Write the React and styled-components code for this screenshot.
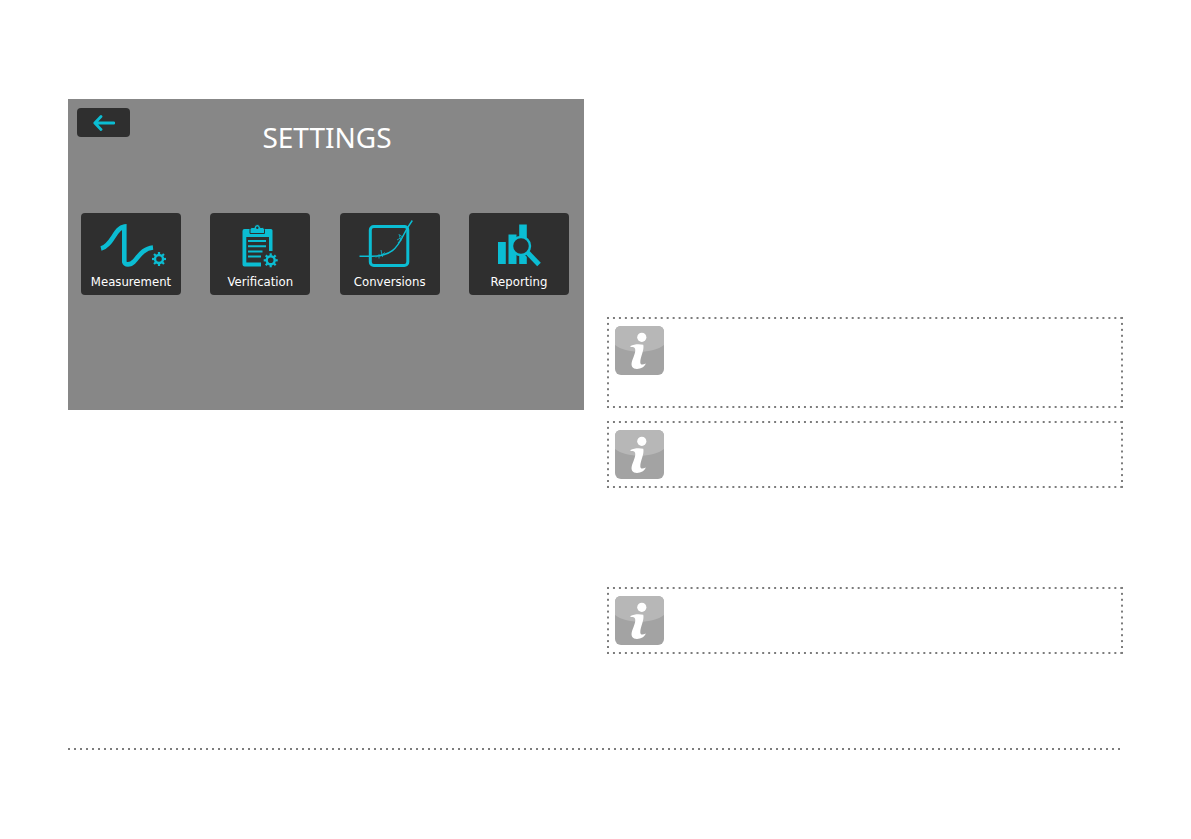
import React from "react";
import styled, { createGlobalStyle } from "styled-components";

const CYAN = "#0bbdd3";
const DARK = "#2f2f2f";
const DOT = "#7c7c7c";

const GlobalStyle = createGlobalStyle`
  * {
    box-sizing: border-box;
  }

  body {
    margin: 0;
    background: #ffffff;
    font-family: "Noto Sans", Tahoma, sans-serif;
  }
`;

const Page = styled.main`
  padding: 99px 68px 88px;
`;

const Columns = styled.div`
  display: grid;
  grid-template-columns: 1fr 1fr;
  gap: 23px;
  align-items: start;
`;

const Screen = styled.section`
  min-height: 311px;
  padding: 9px 15px 115px 9px;
  background: #878787;
`;

const BackButton = styled.button`
  display: flex;
  align-items: center;
  justify-content: center;
  width: 53px;
  height: 29px;
  padding: 0;
  border: 0;
  border-radius: 4px;
  background: ${DARK};
  cursor: pointer;
`;

const Title = styled.h1`
  margin: -19px 0 57px;
  padding-left: 8px;
  color: #ffffff;
  font-size: 28px;
  font-weight: 400;
  line-height: 38px;
  text-align: center;
`;

const Tiles = styled.nav`
  display: flex;
  justify-content: space-between;
  padding-left: 4px;
`;

const Tile = styled.button`
  display: flex;
  flex-direction: column;
  align-items: center;
  gap: 4px;
  width: 100px;
  height: 82px;
  padding: 6px 0 4px;
  border: 0;
  border-radius: 4px;
  background: ${DARK};
  color: #ffffff;
  font-family: "DejaVu Sans Condensed", "Noto Sans", sans-serif;
  font-size: 13px;
  line-height: 18px;
  cursor: pointer;
`;

const Notes = styled.div`
  display: flex;
  flex-direction: column;
  padding-top: 218px;
`;

const Note = styled.aside`
  position: relative;
  min-height: ${({ $tall }) => ($tall ? "91px" : "67px")};
  margin-bottom: ${({ $space }) => $space || 0}px;
  padding: 9px 8px;

  &::before {
    content: "";
    position: absolute;
    inset: -2px;
    background-image:
      linear-gradient(90deg, transparent 2px, ${DOT} 2px, ${DOT} 4px, transparent 4px),
      linear-gradient(90deg, transparent 2px, ${DOT} 2px, ${DOT} 4px, transparent 4px),
      linear-gradient(transparent 2px, ${DOT} 2px, ${DOT} 4px, transparent 4px),
      linear-gradient(transparent 2px, ${DOT} 2px, ${DOT} 4px, transparent 4px);
    background-size: 6px 2px, 6px 2px, 2px 6px, 2px 6px;
    background-position: 0 2px, 0 calc(100% - 2px), 2px 0, calc(100% - 2px) 0;
    background-repeat: round no-repeat, round no-repeat, no-repeat round, no-repeat round;
    pointer-events: none;
  }
`;

const Divider = styled.hr`
  height: 2px;
  margin: 94px 0 0;
  border: 0;
  background: linear-gradient(90deg, ${DOT} 2px, transparent 2px) 0 0 / 6px 2px repeat-x;
`;

const Icon = styled.svg`
  display: block;
  flex: none;
`;

const Gear = ({ x, y }) => (
  <g transform={`translate(${x} ${y})`} stroke={CYAN} fill="none">
    <circle r="4" strokeWidth="2.4" />
    {[0, 45, 90, 135, 180, 225, 270, 315].map((angle) => (
      <path key={angle} d="M0 -4.6V-7" strokeWidth="2.2" transform={`rotate(${angle})`} />
    ))}
  </g>
);

const MeasurementIcon = () => (
  <>
    <path
      d="M5 29.5C16 27 19 8.5 28.3 7.5V43C29 46 34 46.5 38 42.5C43 37 47 29.5 57 28.5"
      fill="none"
      stroke={CYAN}
      strokeWidth="4.6"
    />
    <Gear x={63} y={40} />
  </>
);

const VerificationIcon = () => (
  <>
    <path
      d="M19.5 10H46Q47.5 10 47.5 11.5V32H44V18H21.3V43.5H36V47.5H19.5Q17.5 47.5 17.5 45.5V12Q17.5 10 19.5 10Z"
      fill={CYAN}
    />
    <path
      d="M25 14.5V10.5Q25 8.5 27 8.5H29.3A3 3 0 0 1 35.3 8.5H37.5Q39.5 8.5 39.5 10.5V14.5Z"
      fill={CYAN}
      stroke={DARK}
      strokeWidth="1"
    />
    <circle cx="32.3" cy="8.8" r="1.2" fill={DARK} />
    <path d="M23 22H41M23 27.2H41M23 32.4H37.5M23 37.6H36" stroke={CYAN} strokeWidth="2" />
    <Gear x={45.7} y={41.3} />
  </>
);

const ConversionsIcon = () => (
  <g fill="none" stroke={CYAN}>
    <rect x="15.3" y="7.5" width="37.5" height="39" rx="3.5" strokeWidth="3" />
    <path d="M4.5 37.3H17C36 37.3 42 29 48 17C51 11 54 6 57.3 1.5" strokeWidth="1.5" />
    <path
      d="M21 38.5L24 35.5M24 39.5V35.5M26 31L27.5 38M25 37L30 33.5M42 21L45.5 19M44 15L46 22M45 16L48 18.5M43 24L47 19"
      strokeWidth="0.8"
    />
  </g>
);

const ReportingIcon = () => (
  <>
    <path d="M14 23H21.8V45H14ZM24.5 15.5H32.5V45H24.5ZM35.2 5.5H42.8V45H35.2Z" fill={CYAN} />
    <path d="M43.5 33.5L55 45" stroke={DARK} strokeWidth="7" />
    <path d="M43.5 33.5L55 45.5" stroke={CYAN} strokeWidth="5" />
    <circle cx="37" cy="27" r="9" fill={DARK} stroke={CYAN} strokeWidth="2.4" />
  </>
);

const InfoIcon = () => (
  <Icon width="49" height="49" viewBox="0 0 49 49" role="img" aria-label="Information">
    <rect width="49" height="49" rx="6" fill="#a3a3a3" />
    <path d="M0 19V6Q0 0 6 0H43Q49 0 49 6V19C38 28 11 28 0 19Z" fill="#b7b7b7" />
    <circle cx="26.8" cy="11.3" r="4.6" fill="#ffffff" />
    <path
      d="M15.5 20C19 18.2 24 17.8 28.3 18.8C29.5 24 25.3 31 25.3 36.2C25.3 39.3 27.8 39 30.8 37.5C29.5 41 26 42.9 22 42.9C17.5 42.9 15.8 40 16.8 36C17.8 32 21.3 26 20 22.5C19.2 20.8 17.5 21 15.5 21Z"
      fill="#ffffff"
    />
  </Icon>
);

const items = [
  { label: "Measurement", Drawing: MeasurementIcon },
  { label: "Verification", Drawing: VerificationIcon },
  { label: "Conversions", Drawing: ConversionsIcon },
  { label: "Reporting", Drawing: ReportingIcon },
];

const App = () => {
  return (
    <Page>
      <GlobalStyle />
      <Columns>
        <Screen>
          <BackButton type="button" aria-label="Back">
            <Icon width="22" height="16" viewBox="0 0 22 16">
              <path
                d="M21 8H2M8 1.5L1.8 8L8 14.5"
                fill="none"
                stroke={CYAN}
                strokeWidth="2.8"
                strokeLinecap="round"
                strokeLinejoin="round"
              />
            </Icon>
          </BackButton>
          <Title>SETTINGS</Title>
          <Tiles>
            {items.map(({ label, Drawing }) => (
              <Tile key={label} type="button">
                <Icon width="70" height="50" viewBox="0 0 70 50" aria-hidden="true">
                  <Drawing />
                </Icon>
                <span>{label}</span>
              </Tile>
            ))}
          </Tiles>
        </Screen>

        <Notes>
          <Note $tall $space={13}>
            <InfoIcon />
          </Note>
          <Note $space={99}>
            <InfoIcon />
          </Note>
          <Note>
            <InfoIcon />
          </Note>
        </Notes>
      </Columns>
      <Divider />
    </Page>
  );
};

export default App;
